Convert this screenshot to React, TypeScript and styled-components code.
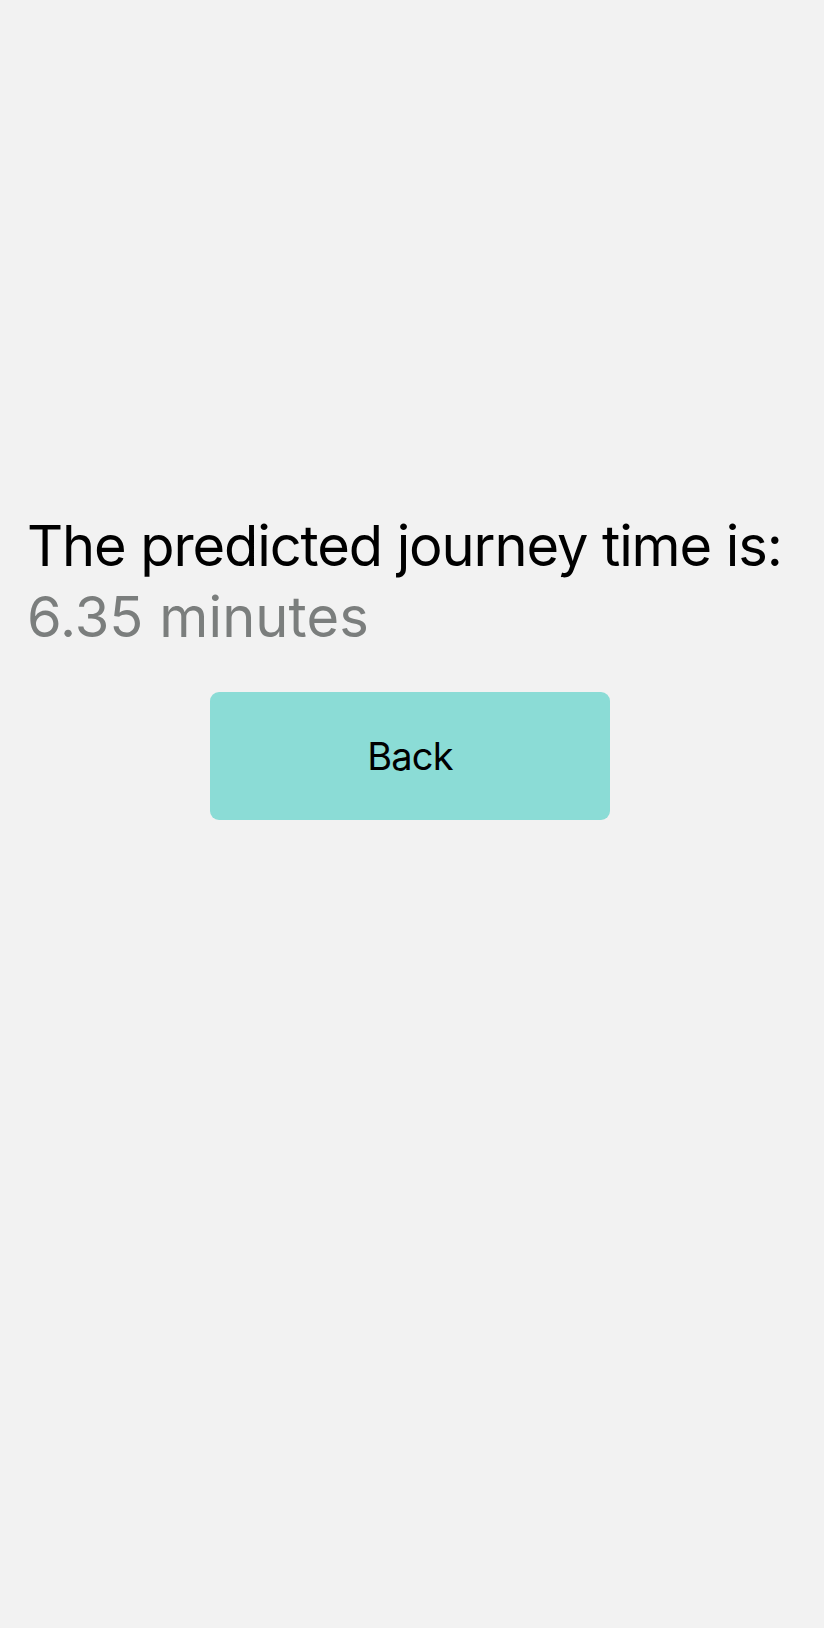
import React from "react";
import styled, { createGlobalStyle } from "styled-components";

const Global = createGlobalStyle`
  html, body { margin: 0; padding: 0; background: #f2f2f2; }
  body { font-family: Inter, "Noto Sans", sans-serif; }
`;

const Screen = styled.main`
  min-height: 1628px;
  box-sizing: border-box;
  padding: 511px 31px 0 27px;
  display: flex;
  flex-direction: column;
`;

const Title = styled.h1`
  margin: 0;
  font-size: 56px;
  line-height: 71px;
  font-weight: 400;
  color: #000;
  letter-spacing: -1.1px;
  white-space: nowrap;
`;

const Value = styled.p`
  margin: 0;
  font-size: 56px;
  line-height: 71px;
  font-weight: 400;
  color: #7b7e7d;
  letter-spacing: 0.1px;
`;

const BackButton = styled.button`
  align-self: center;
  margin-top: 39px;
  width: 400px;
  height: 128px;
  border: none;
  border-radius: 9px;
  background: #8bdcd6;
  color: #000;
  font-family: inherit;
  font-size: 38px;
  letter-spacing: -0.8px;
  cursor: pointer;
`;

export default function App() {
  return (
    <>
      <Global />
      <Screen>
        <Title>The predicted journey time is:</Title>
        <Value>6.35 minutes</Value>
        <BackButton>Back</BackButton>
      </Screen>
    </>
  );
}
